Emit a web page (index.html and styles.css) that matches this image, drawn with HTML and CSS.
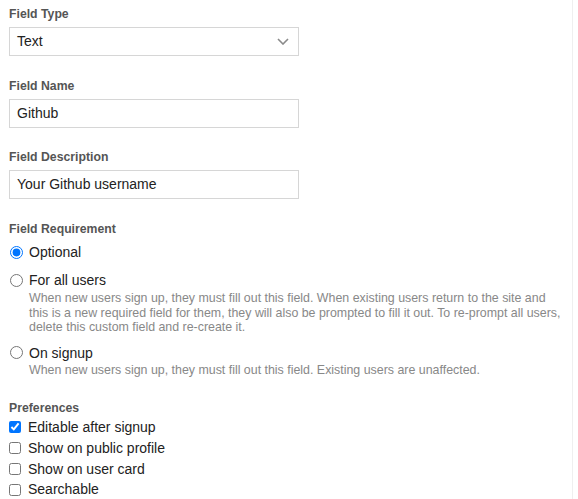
FILE: index.html
```html
<!DOCTYPE html>
<html>
<head>
<meta charset="utf-8">
<link rel="stylesheet" href="styles.css">
</head>
<body>
<div class="page">
  <div class="field">
    <div class="label">Field Type</div>
    <div class="select">
      <span>Text</span>
      <svg class="chev" width="12" height="7" viewBox="0 0 12 7"><path d="M1 1l5 5 5-5" fill="none" stroke="#8a8a8a" stroke-width="1.6"/></svg>
    </div>
  </div>
  <div class="field">
    <div class="label">Field Name</div>
    <div class="input">Github</div>
  </div>
  <div class="field">
    <div class="label">Field Description</div>
    <div class="input">Your Github username</div>
  </div>
  <div class="field">
    <div class="label">Field Requirement</div>
    <label class="radio first"><input type="radio" name="req" checked><span>Optional</span></label>
    <label class="radio"><input type="radio" name="req"><span>For all users</span></label>
    <p class="desc">When new users sign up, they must fill out this field. When existing users return to the site and this is a new required field for them, they will also be prompted to fill it out. To re-prompt all users, delete this custom field and re-create it.</p>
    <label class="radio"><input type="radio" name="req"><span>On signup</span></label>
    <p class="desc">When new users sign up, they must fill out this field. Existing users are unaffected.</p>
  </div>
  <div class="field prefs">
    <div class="label">Preferences</div>
    <label class="check"><input type="checkbox" checked><span>Editable after signup</span></label>
    <label class="check"><input type="checkbox"><span>Show on public profile</span></label>
    <label class="check"><input type="checkbox"><span>Show on user card</span></label>
    <label class="check"><input type="checkbox"><span>Searchable</span></label>
  </div>
</div>
</body>
</html>
```
FILE: styles.css
```css
html, body {
  margin: 0;
  padding: 0;
  background: #fff;
}
body {
  font-family: "Liberation Sans", Arial, sans-serif;
  color: #222;
}
.page {
  width: 563px;
  min-height: 499px;
  padding-left: 9px;
  border-right: 1px solid #efefef;
  box-sizing: content-box;
}
.field {
  padding-top: 6px;
  margin-bottom: 15.7px;
}
.label {
  font-size: 12.25px;
  font-weight: bold;
  color: #555;
  line-height: 16px;
  margin-bottom: 5px;
}
.select, .input {
  width: 290px;
  height: 29px;
  box-sizing: border-box;
  border: 1px solid #d6d6d6;
  font-size: 14px;
  line-height: 27px;
  padding-left: 7px;
  color: #222;
}
.select {
  display: flex;
  justify-content: space-between;
  align-items: center;
  padding-right: 9px;
}
.radio, .check {
  display: flex;
  align-items: center;
  font-size: 14px;
  line-height: 20px;
  color: #222;
}
.radio input {
  margin: 0 6px 0 1px;
  width: 13px;
  height: 13px;
}
.radio {
  margin-top: 8px;
}
.radio.first {
  margin-top: 1px;
}
.desc {
  margin: 1px 6px 0 20px;
  font-size: 12.4px;
  line-height: 14.6px;
  color: #888;
}
.desc + .radio + .desc {
  margin-top: 0;
}
.prefs {
  padding-top: 7px;
}
.prefs .label {
  margin-bottom: 1px;
}
.check {
  line-height: 20.7px;
}
.check input {
  margin: 0 7px 0 0;
  width: 12px;
  height: 12px;
}
```
